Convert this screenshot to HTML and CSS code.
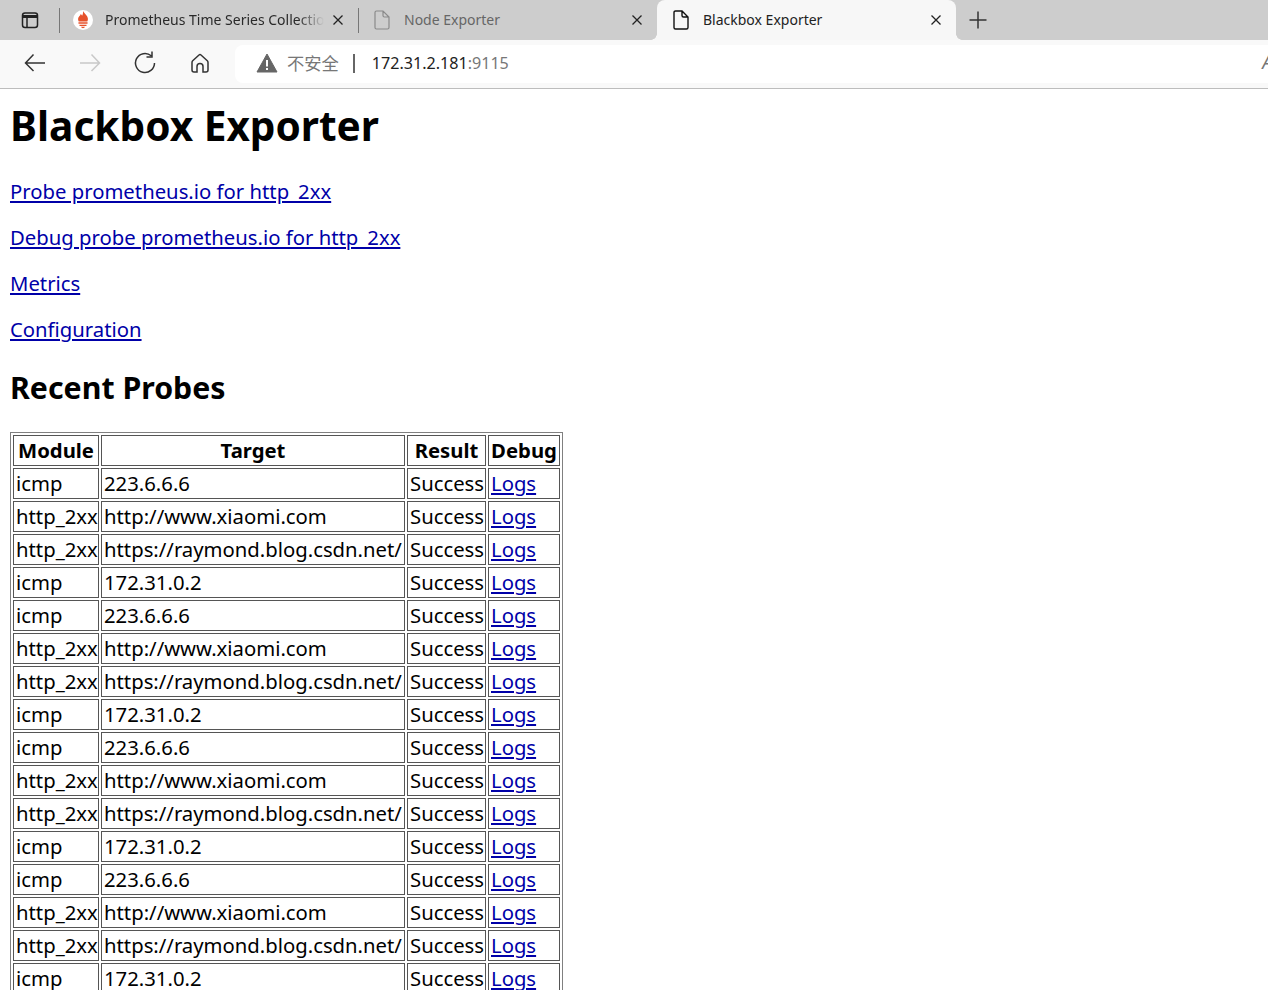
FILE: index.html
```html
<!DOCTYPE html>
<html lang="en">
<head>
<meta charset="utf-8">
<title>Blackbox Exporter</title>
<link rel="stylesheet" href="styles.css">
</head>
<body>
<header class="chrome">
  <div class="tabstrip">
    <div class="strip-start">
      <svg class="icon-sidebar" width="20" height="20" viewBox="0 0 20 20" fill="none" stroke="#222" stroke-width="1.5"><rect x="2.5" y="3" width="15" height="14.5" rx="2.5"/><path d="M2.5 6.500h15" stroke-width="3"/><path d="M7 7v10.500"/></svg>
    </div>
    <div class="tab tab-sep">
      <svg class="tab-icon" width="20" height="20" viewBox="0 0 20 20"><circle cx="10" cy="10" r="10" fill="#fff"/><g transform="translate(10 10) scale(1.3) translate(-10 -10.2)"><path d="M10 3c.5 2 3.800 3.500 3.800 6.500 0 .8-.2 1.300-.5 1.800H6.700c-.3-.5-.5-1-.5-1.800C6.200 7.500 8 7 8.300 5.500c.6.400.9 1 1 1.500C9.900 6 10.200 4.500 10 3z" fill="#e6522c"/><path d="M6.500 12h7v1.100h-7zM7.300 13.800h5.400v1H7.300zM8.500 15.400h3c-.3.800-.9 1.100-1.500 1.100s-1.200-.3-1.500-1.100z" fill="#e6522c"/></g></svg>
      <span class="tab-title tab-title-fade">Prometheus Time Series Collection</span>
      <svg class="tab-close" width="12" height="12" viewBox="0 0 12 12" stroke="#222" stroke-width="1.3"><path d="M1.500 1.500l9 9M10.500 1.500l-9 9"/></svg>
    </div>
    <div class="tab tab-sep tab-muted">
      <svg class="tab-icon" width="20" height="20" viewBox="0 0 20 20" fill="none" stroke="#8a8a8a" stroke-width="1.200"><path d="M3 2.500c0-1 .6-1.500 1.500-1.500H11l6 6v10.500c0 1-.6 1.500-1.500 1.500h-11C3.600 19 3 18.500 3 17.500zM11 1v4.500c0 1 .6 1.500 1.500 1.500H17"/></svg>
      <span class="tab-title">Node Exporter</span>
      <svg class="tab-close" width="12" height="12" viewBox="0 0 12 12" stroke="#222" stroke-width="1.3"><path d="M1.500 1.500l9 9M10.500 1.500l-9 9"/></svg>
    </div>
    <div class="tab tab-active">
      <svg class="tab-icon" width="20" height="20" viewBox="0 0 20 20" fill="none" stroke="#111" stroke-width="1.400"><path d="M3 2.500c0-1 .6-1.500 1.500-1.500H11l6 6v10.500c0 1-.6 1.500-1.500 1.500h-11C3.600 19 3 18.500 3 17.500zM11 1v4.500c0 1 .6 1.500 1.500 1.500H17"/></svg>
      <span class="tab-title">Blackbox Exporter</span>
      <svg class="tab-close" width="12" height="12" viewBox="0 0 12 12" stroke="#222" stroke-width="1.3"><path d="M1.500 1.500l9 9M10.500 1.500l-9 9"/></svg>
    </div>
    <svg class="new-tab" width="20" height="20" viewBox="0 0 20 20" stroke="#333" stroke-width="1.500"><path d="M10 1.500v17M1.500 10h17"/></svg>
  </div>
  <div class="toolbar">
    <div class="nav">
      <svg width="24" height="24" viewBox="0 0 24 24" fill="none" stroke="#333" stroke-width="1.500"><path d="M22 12H2.500M10.500 3.500L2.500 12l8 8"/></svg>
      <svg class="nav-off" width="24" height="24" viewBox="0 0 24 24" fill="none" stroke="#c8c8c8" stroke-width="1.500"><path d="M2 12h19.500M13.500 3.500l8 8.500-8 8"/></svg>
      <svg width="24" height="24" viewBox="0 0 24 24" fill="none" stroke="#333" stroke-width="1.500"><path d="M21.500 12a9.500 9.500 0 1 1-3.300-7.200M19 .5v5.500h-5.500"/></svg>
      <svg width="24" height="24" viewBox="-1 -1 24 24" fill="none" stroke="#333" stroke-width="1.500"><path d="M8 20H5c-1.200 0-2-.8-2-2V10.500c0-.7.200-1.200.7-1.700L10 3c.6-.5 1.400-.5 2 0l6.300 5.800c.5.500.7 1 .7 1.700V18c0 1.200-.8 2-2 2h-3v-5.500c0-1.700-1.200-3-3-3s-3 1.300-3 3z"/></svg>
    </div>
    <div class="address">
      <svg class="warn" width="22" height="20" viewBox="0 0 22 20"><path d="M11 1L21 19H1z" fill="#666" stroke="#666" stroke-linejoin="round"/><path d="M10 7h2v6.500h-2zM10 15h2v2h-2z" fill="#fff"/></svg>
      <span class="insecure">不安全</span>
      <span class="addr-sep"></span>
      <span class="url">172.31.2.181<span class="port">:9115</span></span>
      <span class="read-aloud">A</span>
    </div>
  </div>
</header>
<main class="page">
  <h1>Blackbox Exporter</h1>
  <p><a href="#">Probe prometheus.io for http_2xx</a></p>
  <p><a href="#">Debug probe prometheus.io for http_2xx</a></p>
  <p><a href="#">Metrics</a></p>
  <p><a href="#">Configuration</a></p>
  <h2>Recent Probes</h2>
  <table class="probes">
    <colgroup><col class="c-module"><col class="c-target"><col class="c-result"><col class="c-debug"></colgroup>
    <tr><th>Module</th><th>Target</th><th>Result</th><th>Debug</th></tr>
    <tr><td>icmp</td><td>223.6.6.6</td><td>Success</td><td><a href="#">Logs</a></td></tr>
    <tr><td>http_2xx</td><td>http://www.xiaomi.com</td><td>Success</td><td><a href="#">Logs</a></td></tr>
    <tr><td>http_2xx</td><td>https://raymond.blog.csdn.net/</td><td>Success</td><td><a href="#">Logs</a></td></tr>
    <tr><td>icmp</td><td>172.31.0.2</td><td>Success</td><td><a href="#">Logs</a></td></tr>
    <tr><td>icmp</td><td>223.6.6.6</td><td>Success</td><td><a href="#">Logs</a></td></tr>
    <tr><td>http_2xx</td><td>http://www.xiaomi.com</td><td>Success</td><td><a href="#">Logs</a></td></tr>
    <tr><td>http_2xx</td><td>https://raymond.blog.csdn.net/</td><td>Success</td><td><a href="#">Logs</a></td></tr>
    <tr><td>icmp</td><td>172.31.0.2</td><td>Success</td><td><a href="#">Logs</a></td></tr>
    <tr><td>icmp</td><td>223.6.6.6</td><td>Success</td><td><a href="#">Logs</a></td></tr>
    <tr><td>http_2xx</td><td>http://www.xiaomi.com</td><td>Success</td><td><a href="#">Logs</a></td></tr>
    <tr><td>http_2xx</td><td>https://raymond.blog.csdn.net/</td><td>Success</td><td><a href="#">Logs</a></td></tr>
    <tr><td>icmp</td><td>172.31.0.2</td><td>Success</td><td><a href="#">Logs</a></td></tr>
    <tr><td>icmp</td><td>223.6.6.6</td><td>Success</td><td><a href="#">Logs</a></td></tr>
    <tr><td>http_2xx</td><td>http://www.xiaomi.com</td><td>Success</td><td><a href="#">Logs</a></td></tr>
    <tr><td>http_2xx</td><td>https://raymond.blog.csdn.net/</td><td>Success</td><td><a href="#">Logs</a></td></tr>
    <tr><td>icmp</td><td>172.31.0.2</td><td>Success</td><td><a href="#">Logs</a></td></tr>
  </table>
</main>
</body>
</html>
```
FILE: styles.css
```css
html, body {
  margin: 0;
  padding: 0;
  height: 990px;
  overflow: hidden;
  background: #fff;
}
body {
  font-family: "Noto Sans", "Open Sans", sans-serif;
  color: #000;
}
.chrome {
  height: 89px;
  display: flex;
  flex-direction: column;
}
.tabstrip {
  height: 40px;
  background: #cdcdcd;
  display: flex;
  align-items: stretch;
}
.strip-start {
  width: 59px;
  display: flex;
  align-items: center;
  justify-content: center;
  box-sizing: border-box;
}
.tab {
  width: 299px;
  display: flex;
  align-items: center;
  box-sizing: border-box;
  padding-left: 14px;
  padding-right: 14px;
  font-size: 14px;
  color: #2a2a2a;
  position: relative;
}
.tab-sep::before {
  content: "";
  position: absolute;
  left: 0;
  top: 8px;
  height: 25px;
  width: 1px;
  background: #777;
}
.tab-muted { color: #666; }
.tab-active {
  background: #f7f7f7;
  border-radius: 8px 8px 0 0;
  color: #222;
}
.tab-active::before,
.tab-active::after {
  content: "";
  position: absolute;
  bottom: 0;
  width: 6px;
  height: 6px;
}
.tab-active::before {
  left: -6px;
  background: radial-gradient(circle at 0 0, #cdcdcd 5.500px, #f7f7f7 6px);
}
.tab-active::after {
  right: -6px;
  background: radial-gradient(circle at 100% 0, #cdcdcd 5.500px, #f7f7f7 6px);
}
.tab-icon { flex: none; margin-right: 12px; }
.tab-title {
  flex: 1;
  white-space: nowrap;
  overflow: hidden;
  margin-right: 8px;
  padding-bottom: 2px;
}
.tab-title-fade {
  -webkit-mask-image: linear-gradient(to right, #000 88%, transparent 100%);
  mask-image: linear-gradient(to right, #000 88%, transparent 100%);
}
.tab-close { flex: none; }
.new-tab { align-self: center; margin-left: 12px; }
.toolbar {
  height: 49px;
  box-sizing: border-box;
  background: #f9f9f9;
  border-bottom: 1px solid #bdbdbd;
  padding-top: 5px;
  padding-bottom: 5px;
  display: flex;
}
.nav {
  width: 235px;
  flex: none;
  display: flex;
  align-items: center;
  gap: 31px;
  padding-left: 23px;
  padding-bottom: 2px;
  box-sizing: border-box;
}
.address {
  flex: 1;
  background: #fff;
  border-radius: 8px 0 0 8px;
  display: flex;
  align-items: center;
  padding-left: 21px;
  padding-bottom: 2px;
  box-sizing: border-box;
  font-size: 16.100px;
  position: relative;
  overflow: hidden;
}
.warn { flex: none; margin-right: 9px; }
.insecure {
  color: #777;
  font-family: "Noto Sans CJK SC", sans-serif;
  font-size: 17.300px;
  padding-bottom: 2px;
}
.addr-sep {
  width: 2px;
  height: 19px;
  background: #666;
  margin-left: 14px;
  margin-right: 17px;
}
.url { color: #222; }
.port { color: #777; }
.read-aloud {
  position: absolute;
  right: -5px;
  top: 4px;
  color: #777;
  font-size: 19px;
  font-style: italic;
}
.page { padding: 0 10px; }
h1 {
  font-size: 40.600px;
  line-height: 58px;
  font-weight: 700;
  margin: 8px 0 22px;
}
p {
  font-size: 20.300px;
  line-height: 28px;
  margin: 18px 0;
}
a { color: #0000a8; }
h2 {
  font-size: 30.300px;
  line-height: 44px;
  font-weight: 700;
  margin: 23px 0 22px;
}
.probes {
  border: 1px solid #808080;
  border-spacing: 2px;
  border-collapse: separate;
  font-size: 20.300px;
  table-layout: fixed;
  width: 553px;
}
.c-module { width: 86px; }
.c-target { width: 304px; }
.c-result { width: 79px; }
.c-debug { width: 72px; }
.probes th, .probes td {
  border: 1px solid #555;
  padding: 0 2px;
  height: 29px;
  line-height: 29px;
  white-space: nowrap;
  box-sizing: content-box;
}
.probes th { font-weight: 700; text-align: center; }
.probes td { text-align: left; }
```
